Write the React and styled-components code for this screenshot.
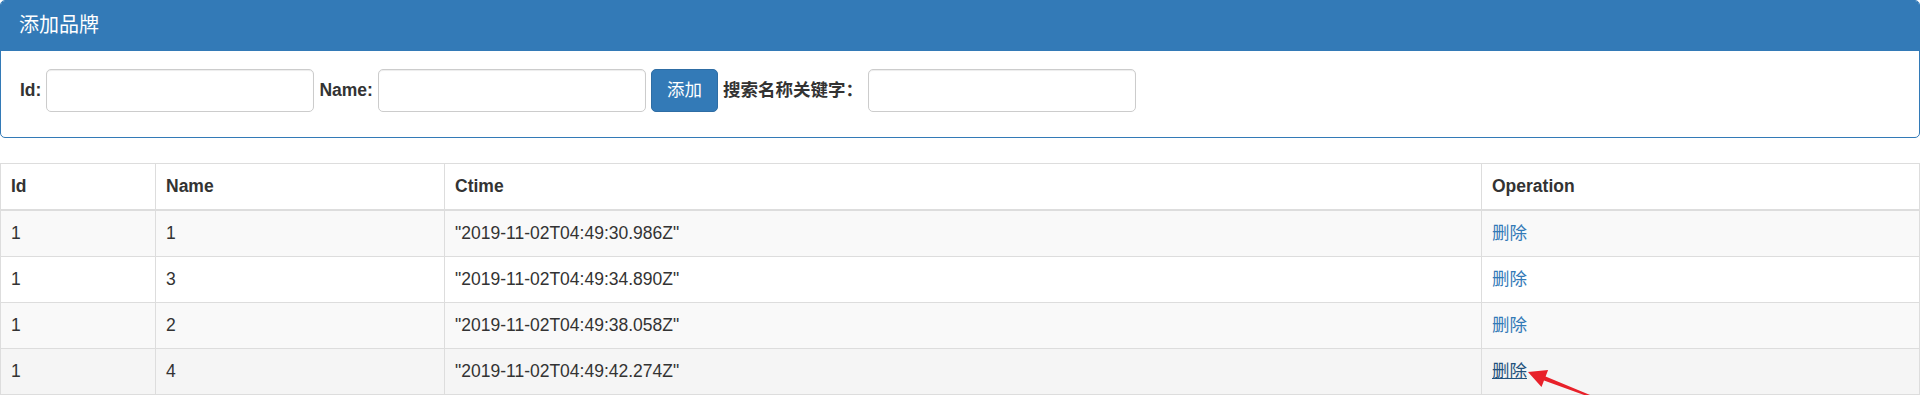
import React from 'react';
import styled, { createGlobalStyle } from 'styled-components';

const GlobalStyle = createGlobalStyle`
  body {
    margin: 0;
    font-family: "Liberation Sans", Arial, "Noto Sans CJK SC", sans-serif;
    font-size: 17.5px;
    line-height: 25px;
    color: #333;
    background: #fff;
  }
  * {
    box-sizing: border-box;
  }
`;

const Page = styled.div`
  position: relative;
  width: 1920px;
`;

const Panel = styled.div`
  border: 1px solid #337ab7;
  border-radius: 5px;
  margin-bottom: 25px;
  background: #fff;
`;

const PanelHeading = styled.div`
  background: #337ab7;
  color: #fff;
  border-bottom: 1px solid #337ab7;
  border-radius: 4px 4px 0 0;
  padding: 12px 18px;
  font-size: 20px;
  line-height: 25px;
`;

const PanelBody = styled.div`
  padding: 18px 19px 25px;
  display: flex;
  align-items: center;
  gap: 5px;
`;

const FormGroup = styled.div`
  display: flex;
  align-items: center;
  gap: 5px;
`;

const Label = styled.label`
  font-weight: bold;
  white-space: nowrap;
`;

const Input = styled.input`
  width: 268px;
  height: 43px;
  padding: 7px 15px;
  font: inherit;
  color: #555;
  border: 1px solid #ccc;
  border-radius: 5px;
  box-shadow: inset 0 1px 1px rgba(0, 0, 0, 0.075);
  background: #fff;
`;

const Button = styled.button`
  height: 43px;
  padding: 0 15px;
  font: inherit;
  color: #fff;
  background: #337ab7;
  border: 1px solid #2e6da4;
  border-radius: 5px;
  cursor: pointer;
`;

const Table = styled.table`
  width: 100%;
  border-collapse: collapse;
  border-spacing: 0;
  border: 1px solid #ddd;
`;

const Th = styled.th`
  text-align: left;
  font-weight: bold;
  padding: 10px;
  line-height: 25px;
  border: 1px solid #ddd;
  border-bottom: 2px solid #ddd;
  width: ${(p) => p.$w}px;
`;

const Row = styled.tr`
  background: ${(p) => (p.$hover ? '#f5f5f5' : p.$striped ? '#f9f9f9' : '#fff')};
`;

const Td = styled.td`
  padding: 10px;
  line-height: 25px;
  border: 1px solid #ddd;
`;

const DeleteLink = styled.a`
  color: ${(p) => (p.$hover ? '#23527c' : '#337ab7')};
  text-decoration: ${(p) => (p.$hover ? 'underline' : 'none')};
  cursor: pointer;
`;

const Pointer = styled.svg`
  position: absolute;
  left: 1520px;
  top: 362px;
  width: 85px;
  height: 45px;
  pointer-events: none;
`;

const brands = [
  { id: 1, name: '1', ctime: '2019-11-02T04:49:30.986Z' },
  { id: 1, name: '3', ctime: '2019-11-02T04:49:34.890Z' },
  { id: 1, name: '2', ctime: '2019-11-02T04:49:38.058Z' },
  { id: 1, name: '4', ctime: '2019-11-02T04:49:42.274Z' },
];

export default function App() {
  return (
    <Page>
      <GlobalStyle />
      <Panel>
        <PanelHeading>添加品牌</PanelHeading>
        <PanelBody>
          <FormGroup>
            <Label>Id:</Label>
            <Input type="text" />
          </FormGroup>
          <FormGroup>
            <Label>Name:</Label>
            <Input type="text" />
          </FormGroup>
          <Button>添加</Button>
          <FormGroup>
            <Label>搜索名称关键字：</Label>
            <Input type="text" />
          </FormGroup>
        </PanelBody>
      </Panel>

      <Table>
        <thead>
          <tr>
            <Th $w={155}>Id</Th>
            <Th $w={289}>Name</Th>
            <Th $w={1037}>Ctime</Th>
            <Th>Operation</Th>
          </tr>
        </thead>
        <tbody>
          {brands.map((b, i) => {
            const hover = i === brands.length - 1;
            return (
              <Row key={b.ctime} $striped={i % 2 === 0} $hover={hover}>
                <Td>{b.id}</Td>
                <Td>{b.name}</Td>
                <Td>{JSON.stringify(b.ctime)}</Td>
                <Td>
                  <DeleteLink $hover={hover}>删除</DeleteLink>
                </Td>
              </Row>
            );
          })}
        </tbody>
      </Table>

      {/* red annotation arrow pointing at the last delete link */}
      <Pointer viewBox="0 0 85 45">
        <polygon
          points="8,10 28.1,8.1 25.6,14.4 75.3,35.2 74.7,36.8 24,18.6 21.5,24.9"
          fill="#e8212a"
        />
      </Pointer>
    </Page>
  );
}
